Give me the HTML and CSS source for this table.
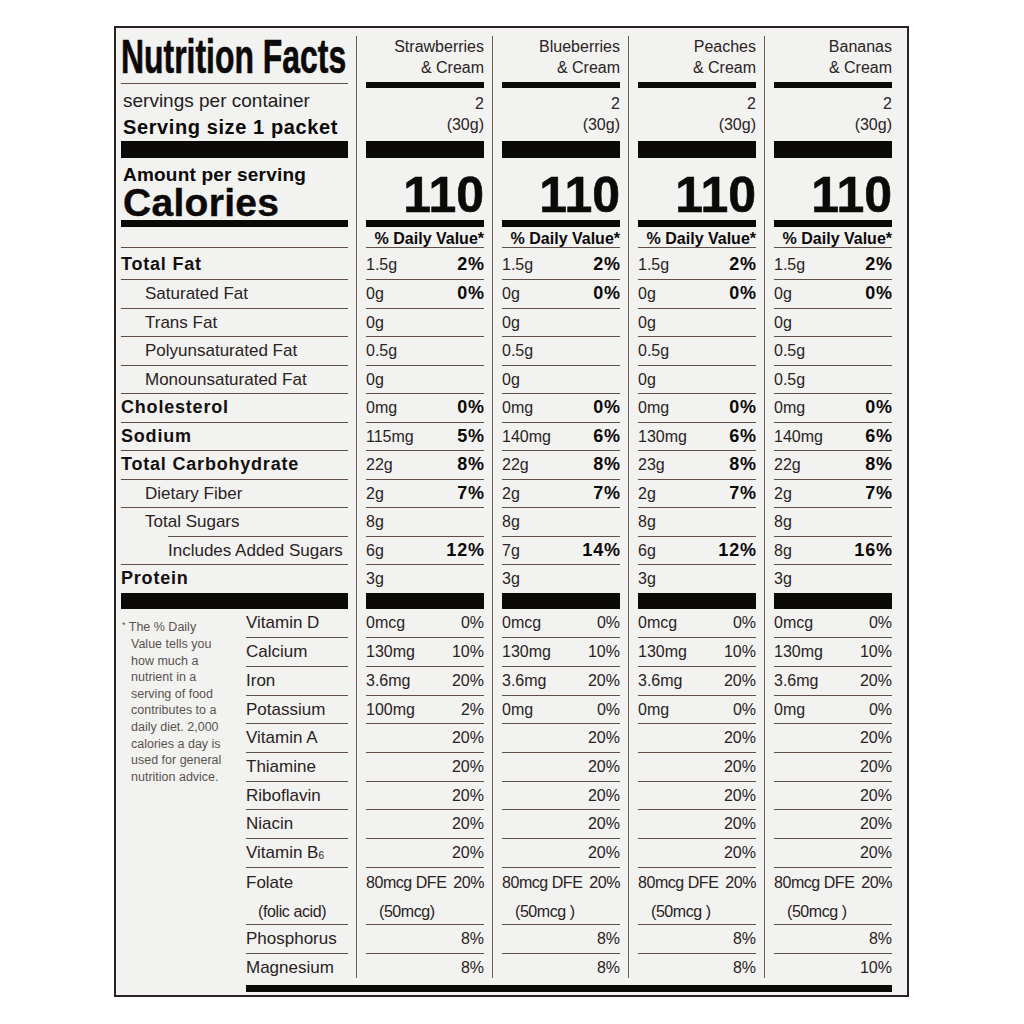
FILE: index.html
```html
<!DOCTYPE html>
<html>
<head>
<meta charset="utf-8">
<title>Nutrition Facts</title>
<link rel="stylesheet" href="styles.css">
</head>
<body>
<div class="panel">
  <div class="grid">
    <div class="labels">
      <div class="title"><span>Nutrition Facts</span></div>
      <div class="servings">
        <div class="spc">servings per container</div>
        <div class="ss">Serving size 1 packet</div>
      </div>
      <div class="bar thick"></div>
      <div class="cal">
        <div class="aps">Amount per serving</div>
        <div class="calories">Calories</div>
      </div>
      <div class="bar med"></div>
      <div class="dvrow"></div>
      <div class="row first main">Total Fat</div>
      <div class="row sub">Saturated Fat</div>
      <div class="row sub">Trans Fat</div>
      <div class="row sub">Polyunsaturated Fat</div>
      <div class="row sub">Monounsaturated Fat</div>
      <div class="row main">Cholesterol</div>
      <div class="row main">Sodium</div>
      <div class="row main">Total Carbohydrate</div>
      <div class="row sub">Dietary Fiber</div>
      <div class="row sub sugars">Total Sugars</div>
      <div class="row sub2">Includes Added Sugars</div>
      <div class="row last main">Protein</div>
      <div class="bar thick2"></div>
      <div class="lower">
        <p class="foot"><span class="ast">*</span> The % Daily<br>Value tells you<br>how much a<br>nutrient in a<br>serving of food<br>contributes to a<br>daily diet. 2,000<br>calories a day is<br>used for general<br>nutrition advice.</p>
        <div class="vlabels">
          <div class="vrow">Vitamin D</div>
          <div class="vrow">Calcium</div>
          <div class="vrow">Iron</div>
          <div class="vrow">Potassium</div>
          <div class="vrow">Vitamin A</div>
          <div class="vrow">Thiamine</div>
          <div class="vrow">Riboflavin</div>
          <div class="vrow">Niacin</div>
          <div class="vrow">Vitamin B<sub>6</sub></div>
          <div class="vrow folate"><div>Folate</div><div class="fa">(folic acid)</div></div>
          <div class="vrow">Phosphorus</div>
          <div class="vrow end">Magnesium</div>
        </div>
      </div>
    </div>

    <div class="col">
      <div class="head">Strawberries<br>&amp; Cream</div>
      <div class="bar thin"></div>
      <div class="serv">2<br>(30g)</div>
      <div class="bar thick"></div>
      <div class="calnum">110</div>
      <div class="bar med"></div>
      <div class="dv">% Daily Value*</div>
      <div class="row first"><span>1.5g</span><b>2%</b></div>
      <div class="row"><span>0g</span><b>0%</b></div>
      <div class="row"><span>0g</span></div>
      <div class="row"><span>0.5g</span></div>
      <div class="row"><span>0g</span></div>
      <div class="row"><span>0mg</span><b>0%</b></div>
      <div class="row"><span>115mg</span><b>5%</b></div>
      <div class="row"><span>22g</span><b>8%</b></div>
      <div class="row"><span>2g</span><b>7%</b></div>
      <div class="row"><span>8g</span></div>
      <div class="row"><span>6g</span><b>12%</b></div>
      <div class="row last"><span>3g</span></div>
      <div class="bar thick2"></div>
      <div class="vrow"><span>0mcg</span><span class="p">0%</span></div>
      <div class="vrow"><span>130mg</span><span class="p">10%</span></div>
      <div class="vrow"><span>3.6mg</span><span class="p">20%</span></div>
      <div class="vrow"><span>100mg</span><span class="p">2%</span></div>
      <div class="vrow"><span class="p">20%</span></div>
      <div class="vrow"><span class="p">20%</span></div>
      <div class="vrow"><span class="p">20%</span></div>
      <div class="vrow"><span class="p">20%</span></div>
      <div class="vrow"><span class="p">20%</span></div>
      <div class="vrow folate"><div class="fl"><span>80mcg DFE</span><span class="p">20%</span></div><div class="fv">(50mcg)</div></div>
      <div class="vrow"><span class="p">8%</span></div>
      <div class="vrow end"><span class="p">8%</span></div>
    </div>

    <div class="col">
      <div class="head">Blueberries<br>&amp; Cream</div>
      <div class="bar thin"></div>
      <div class="serv">2<br>(30g)</div>
      <div class="bar thick"></div>
      <div class="calnum">110</div>
      <div class="bar med"></div>
      <div class="dv">% Daily Value*</div>
      <div class="row first"><span>1.5g</span><b>2%</b></div>
      <div class="row"><span>0g</span><b>0%</b></div>
      <div class="row"><span>0g</span></div>
      <div class="row"><span>0.5g</span></div>
      <div class="row"><span>0g</span></div>
      <div class="row"><span>0mg</span><b>0%</b></div>
      <div class="row"><span>140mg</span><b>6%</b></div>
      <div class="row"><span>22g</span><b>8%</b></div>
      <div class="row"><span>2g</span><b>7%</b></div>
      <div class="row"><span>8g</span></div>
      <div class="row"><span>7g</span><b>14%</b></div>
      <div class="row last"><span>3g</span></div>
      <div class="bar thick2"></div>
      <div class="vrow"><span>0mcg</span><span class="p">0%</span></div>
      <div class="vrow"><span>130mg</span><span class="p">10%</span></div>
      <div class="vrow"><span>3.6mg</span><span class="p">20%</span></div>
      <div class="vrow"><span>0mg</span><span class="p">0%</span></div>
      <div class="vrow"><span class="p">20%</span></div>
      <div class="vrow"><span class="p">20%</span></div>
      <div class="vrow"><span class="p">20%</span></div>
      <div class="vrow"><span class="p">20%</span></div>
      <div class="vrow"><span class="p">20%</span></div>
      <div class="vrow folate"><div class="fl"><span>80mcg DFE</span><span class="p">20%</span></div><div class="fv">(50mcg )</div></div>
      <div class="vrow"><span class="p">8%</span></div>
      <div class="vrow end"><span class="p">8%</span></div>
    </div>

    <div class="col">
      <div class="head">Peaches<br>&amp; Cream</div>
      <div class="bar thin"></div>
      <div class="serv">2<br>(30g)</div>
      <div class="bar thick"></div>
      <div class="calnum">110</div>
      <div class="bar med"></div>
      <div class="dv">% Daily Value*</div>
      <div class="row first"><span>1.5g</span><b>2%</b></div>
      <div class="row"><span>0g</span><b>0%</b></div>
      <div class="row"><span>0g</span></div>
      <div class="row"><span>0.5g</span></div>
      <div class="row"><span>0g</span></div>
      <div class="row"><span>0mg</span><b>0%</b></div>
      <div class="row"><span>130mg</span><b>6%</b></div>
      <div class="row"><span>23g</span><b>8%</b></div>
      <div class="row"><span>2g</span><b>7%</b></div>
      <div class="row"><span>8g</span></div>
      <div class="row"><span>6g</span><b>12%</b></div>
      <div class="row last"><span>3g</span></div>
      <div class="bar thick2"></div>
      <div class="vrow"><span>0mcg</span><span class="p">0%</span></div>
      <div class="vrow"><span>130mg</span><span class="p">10%</span></div>
      <div class="vrow"><span>3.6mg</span><span class="p">20%</span></div>
      <div class="vrow"><span>0mg</span><span class="p">0%</span></div>
      <div class="vrow"><span class="p">20%</span></div>
      <div class="vrow"><span class="p">20%</span></div>
      <div class="vrow"><span class="p">20%</span></div>
      <div class="vrow"><span class="p">20%</span></div>
      <div class="vrow"><span class="p">20%</span></div>
      <div class="vrow folate"><div class="fl"><span>80mcg DFE</span><span class="p">20%</span></div><div class="fv">(50mcg )</div></div>
      <div class="vrow"><span class="p">8%</span></div>
      <div class="vrow end"><span class="p">8%</span></div>
    </div>

    <div class="col">
      <div class="head">Bananas<br>&amp; Cream</div>
      <div class="bar thin"></div>
      <div class="serv">2<br>(30g)</div>
      <div class="bar thick"></div>
      <div class="calnum">110</div>
      <div class="bar med"></div>
      <div class="dv">% Daily Value*</div>
      <div class="row first"><span>1.5g</span><b>2%</b></div>
      <div class="row"><span>0g</span><b>0%</b></div>
      <div class="row"><span>0g</span></div>
      <div class="row"><span>0.5g</span></div>
      <div class="row"><span>0.5g</span></div>
      <div class="row"><span>0mg</span><b>0%</b></div>
      <div class="row"><span>140mg</span><b>6%</b></div>
      <div class="row"><span>22g</span><b>8%</b></div>
      <div class="row"><span>2g</span><b>7%</b></div>
      <div class="row"><span>8g</span></div>
      <div class="row"><span>8g</span><b>16%</b></div>
      <div class="row last"><span>3g</span></div>
      <div class="bar thick2"></div>
      <div class="vrow"><span>0mcg</span><span class="p">0%</span></div>
      <div class="vrow"><span>130mg</span><span class="p">10%</span></div>
      <div class="vrow"><span>3.6mg</span><span class="p">20%</span></div>
      <div class="vrow"><span>0mg</span><span class="p">0%</span></div>
      <div class="vrow"><span class="p">20%</span></div>
      <div class="vrow"><span class="p">20%</span></div>
      <div class="vrow"><span class="p">20%</span></div>
      <div class="vrow"><span class="p">20%</span></div>
      <div class="vrow"><span class="p">20%</span></div>
      <div class="vrow folate"><div class="fl"><span>80mcg DFE</span><span class="p">20%</span></div><div class="fv">(50mcg )</div></div>
      <div class="vrow"><span class="p">8%</span></div>
      <div class="vrow end"><span class="p">10%</span></div>
    </div>
  </div>
  <div class="bottom-bar"></div>
</div>
</body>
</html>
```

FILE: styles.css
```css
html, body {
  margin: 0;
  padding: 0;
  background: #ffffff;
}
body {
  font-family: "Liberation Sans", Arial, Helvetica, sans-serif;
  color: #1d1716;
}
.panel {
  margin: 26px 0 0 114px;
  width: 795px;
  height: 971px;
  box-sizing: border-box;
  border: 2px solid #2b2323;
  background: #f2f2f1;
  padding: 8px 15px 3px 5px;
}
.grid {
  display: flex;
  height: 942px;
}
.labels {
  width: 227px;
  flex: none;
}
.col {
  width: 118px;
  flex: none;
  margin-left: 8px;
  border-left: 1px solid #6a5a52;
  padding-left: 9px;
}

/* bars */
.bar { background: #0c0909; }
.bar.thick { height: 17px; }
.bar.med { height: 7px; }
.bar.thin { height: 6px; }
.bar.thick2 { height: 16px; }

/* left header */
.title {
  height: 48px;
  box-sizing: border-box;
  padding-top: 2px;
  border-bottom: 1px solid #5f4f47;
  font-size: 48px;
  line-height: 37px;
  font-weight: bold;
  white-space: nowrap;
}
.title span {
  display: inline-block;
  transform: scaleX(0.665);
  transform-origin: 0 0;
  -webkit-text-stroke: 0.6px #0c0909;
  color: #0c0909;
}
.servings {
  height: 57px;
  box-sizing: border-box;
  padding-top: 4px;
  padding-left: 2px;
}
.spc {
  font-size: 19px;
  line-height: 26px;
  color: #242020;
}
.ss {
  font-size: 20px;
  line-height: 26px;
  font-weight: bold;
  letter-spacing: 0.6px;
  color: #0c0909;
}
.cal {
  height: 62px;
  box-sizing: border-box;
  padding-top: 6px;
  padding-left: 2px;
  color: #0c0909;
}
.aps {
  font-size: 19px;
  line-height: 22px;
  font-weight: bold;
  letter-spacing: 0.2px;
}
.calories {
  font-size: 39px;
  line-height: 34px;
  font-weight: bold;
  letter-spacing: 0.3px;
  -webkit-text-stroke: 0.4px #0c0909;
}
.dvrow {
  height: 21px;
  box-sizing: border-box;
  border-bottom: 1px solid #5f4f47;
}

/* nutrient rows */
.row {
  box-sizing: border-box;
  height: 28.55px;
  border-bottom: 1px solid #5f4f47;
  line-height: 27.55px;
  font-size: 17px;
  white-space: nowrap;
}
.row.first {
  height: 32px;
  padding-top: 2px;
  line-height: 29px;
}
.row.last {
  height: 28px;
  line-height: 27px;
  border-bottom: none;
}
.main {
  font-size: 18px;
  font-weight: bold;
  letter-spacing: 0.8px;
  color: #141010;
}
.sub { padding-left: 24px; color: #2a2222; }
.sub2 { padding-left: 47px; color: #2a2222; }
.row.sugars {
  margin-left: 47px;
  padding-left: 0;
  text-indent: -23px;
}

/* value columns */
.head {
  height: 46px;
  box-sizing: border-box;
  text-align: right;
  font-size: 16px;
  line-height: 21px;
  color: #2b2323;
}
.serv {
  height: 53px;
  box-sizing: border-box;
  padding-top: 5px;
  text-align: right;
  font-size: 16px;
  line-height: 21px;
  color: #2b2323;
}
.calnum {
  height: 62px;
  box-sizing: border-box;
  padding-top: 13px;
  line-height: 49px;
  font-size: 50px;
  font-weight: bold;
  text-align: right;
  color: #0c0909;
  -webkit-text-stroke: 0.6px #0c0909;
}
.dv {
  height: 21px;
  box-sizing: border-box;
  padding-top: 3px;
  line-height: 17px;
  font-size: 16px;
  font-weight: bold;
  text-align: right;
  border-bottom: 1px solid #5f4f47;
  color: #0c0909;
  white-space: nowrap;
}
.col .row {
  display: flex;
  align-items: baseline;
  font-size: 16px;
  color: #2a2222;
}
.col .row b {
  margin-left: auto;
  font-size: 18px;
  font-weight: bold;
  letter-spacing: 0.8px;
  margin-right: -0.8px;
  color: #0c0909;
}

/* lower area */
.lower {
  display: flex;
}
.foot {
  width: 125px;
  flex: none;
  margin: 0;
  box-sizing: border-box;
  padding: 8px 0 0 10px;
  text-indent: -9px;
  font-size: 12.5px;
  line-height: 16.6px;
  color: #5b524e;
  white-space: nowrap;
}
.ast {
  font-size: 9px;
  vertical-align: 3px;
}
.vlabels {
  flex: 1;
}
.vrow {
  box-sizing: border-box;
  height: 28.7px;
  border-bottom: 1px solid #5f4f47;
  padding-top: 1px;
  line-height: 26.7px;
  font-size: 17px;
  color: #2a2222;
  white-space: nowrap;
}
.vrow.end { border-bottom: none; }
.vrow.folate {
  height: 57.4px;
  padding-top: 0;
  line-height: 29px;
}
.fa {
  padding-left: 12px;
  font-size: 16px;
  letter-spacing: -0.4px;
}
sub {
  font-size: 10px;
  line-height: 0;
  vertical-align: -1px;
}
.col .vrow {
  display: flex;
  align-items: baseline;
  font-size: 16px;
}
.col .vrow.folate {
  display: block;
}
.fl {
  display: flex;
  font-size: 16px;
  letter-spacing: -0.45px;
}
.fv {
  padding-left: 13px;
  font-size: 16px;
  letter-spacing: -0.45px;
}
.p { margin-left: auto; }

.bottom-bar {
  margin: 7px 0 0 125px;
  height: 7px;
  background: #0c0909;
}
```
